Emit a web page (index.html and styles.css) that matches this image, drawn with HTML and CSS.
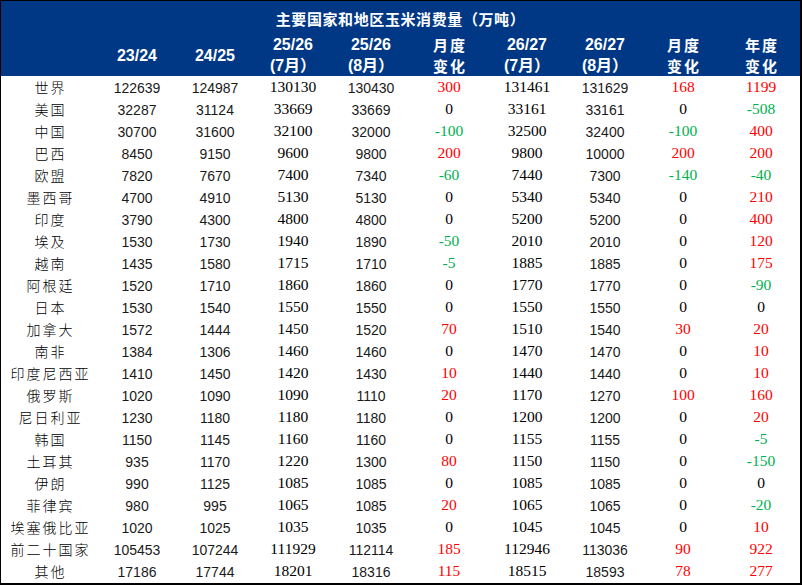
FILE: index.html
```html
<!DOCTYPE html>
<html lang="zh">
<head>
<meta charset="utf-8">
<title>主要国家和地区玉米消费量</title>
<link rel="stylesheet" href="styles.css">
</head>
<body>
<div class="frame">
  <div class="head">
    <div class="title">主要国家和地区玉米消费量（万吨）</div>
    <div class="row hrow">
      <div></div>
      <div class="hc">23/24</div>
      <div class="hc">24/25</div>
      <div class="hc">25/26<br>(7月）</div>
      <div class="hc">25/26<br>(8月）</div>
      <div class="hc zh">月度<br>变化</div>
      <div class="hc">26/27<br>(7月）</div>
      <div class="hc">26/27<br>(8月）</div>
      <div class="hc zh">月度<br>变化</div>
      <div class="hc zh">年度<br>变化</div>
    </div>
  </div>
  <div class="body">
    <div class="row"><div class="nm">世界</div><div class="sn">122639</div><div class="sn">124987</div><div class="sf">130130</div><div class="sn">130430</div><div class="sf r">300</div><div class="sf">131461</div><div class="sn">131629</div><div class="sf r">168</div><div class="sf r">1199</div></div>
    <div class="row"><div class="nm">美国</div><div class="sn">32287</div><div class="sn">31124</div><div class="sf">33669</div><div class="sn">33669</div><div class="sf">0</div><div class="sf">33161</div><div class="sn">33161</div><div class="sf">0</div><div class="sf g">-508</div></div>
    <div class="row"><div class="nm">中国</div><div class="sn">30700</div><div class="sn">31600</div><div class="sf">32100</div><div class="sn">32000</div><div class="sf g">-100</div><div class="sf">32500</div><div class="sn">32400</div><div class="sf g">-100</div><div class="sf r">400</div></div>
    <div class="row"><div class="nm">巴西</div><div class="sn">8450</div><div class="sn">9150</div><div class="sf">9600</div><div class="sn">9800</div><div class="sf r">200</div><div class="sf">9800</div><div class="sn">10000</div><div class="sf r">200</div><div class="sf r">200</div></div>
    <div class="row"><div class="nm">欧盟</div><div class="sn">7820</div><div class="sn">7670</div><div class="sf">7400</div><div class="sn">7340</div><div class="sf g">-60</div><div class="sf">7440</div><div class="sn">7300</div><div class="sf g">-140</div><div class="sf g">-40</div></div>
    <div class="row"><div class="nm">墨西哥</div><div class="sn">4700</div><div class="sn">4910</div><div class="sf">5130</div><div class="sn">5130</div><div class="sf">0</div><div class="sf">5340</div><div class="sn">5340</div><div class="sf">0</div><div class="sf r">210</div></div>
    <div class="row"><div class="nm">印度</div><div class="sn">3790</div><div class="sn">4300</div><div class="sf">4800</div><div class="sn">4800</div><div class="sf">0</div><div class="sf">5200</div><div class="sn">5200</div><div class="sf">0</div><div class="sf r">400</div></div>
    <div class="row"><div class="nm">埃及</div><div class="sn">1530</div><div class="sn">1730</div><div class="sf">1940</div><div class="sn">1890</div><div class="sf g">-50</div><div class="sf">2010</div><div class="sn">2010</div><div class="sf">0</div><div class="sf r">120</div></div>
    <div class="row"><div class="nm">越南</div><div class="sn">1435</div><div class="sn">1580</div><div class="sf">1715</div><div class="sn">1710</div><div class="sf g">-5</div><div class="sf">1885</div><div class="sn">1885</div><div class="sf">0</div><div class="sf r">175</div></div>
    <div class="row"><div class="nm">阿根廷</div><div class="sn">1520</div><div class="sn">1710</div><div class="sf">1860</div><div class="sn">1860</div><div class="sf">0</div><div class="sf">1770</div><div class="sn">1770</div><div class="sf">0</div><div class="sf g">-90</div></div>
    <div class="row"><div class="nm">日本</div><div class="sn">1530</div><div class="sn">1540</div><div class="sf">1550</div><div class="sn">1550</div><div class="sf">0</div><div class="sf">1550</div><div class="sn">1550</div><div class="sf">0</div><div class="sf">0</div></div>
    <div class="row"><div class="nm">加拿大</div><div class="sn">1572</div><div class="sn">1444</div><div class="sf">1450</div><div class="sn">1520</div><div class="sf r">70</div><div class="sf">1510</div><div class="sn">1540</div><div class="sf r">30</div><div class="sf r">20</div></div>
    <div class="row"><div class="nm">南非</div><div class="sn">1384</div><div class="sn">1306</div><div class="sf">1460</div><div class="sn">1460</div><div class="sf">0</div><div class="sf">1470</div><div class="sn">1470</div><div class="sf">0</div><div class="sf r">10</div></div>
    <div class="row"><div class="nm">印度尼西亚</div><div class="sn">1410</div><div class="sn">1450</div><div class="sf">1420</div><div class="sn">1430</div><div class="sf r">10</div><div class="sf">1440</div><div class="sn">1440</div><div class="sf">0</div><div class="sf r">10</div></div>
    <div class="row"><div class="nm">俄罗斯</div><div class="sn">1020</div><div class="sn">1090</div><div class="sf">1090</div><div class="sn">1110</div><div class="sf r">20</div><div class="sf">1170</div><div class="sn">1270</div><div class="sf r">100</div><div class="sf r">160</div></div>
    <div class="row"><div class="nm">尼日利亚</div><div class="sn">1230</div><div class="sn">1180</div><div class="sf">1180</div><div class="sn">1180</div><div class="sf">0</div><div class="sf">1200</div><div class="sn">1200</div><div class="sf">0</div><div class="sf r">20</div></div>
    <div class="row"><div class="nm">韩国</div><div class="sn">1150</div><div class="sn">1145</div><div class="sf">1160</div><div class="sn">1160</div><div class="sf">0</div><div class="sf">1155</div><div class="sn">1155</div><div class="sf">0</div><div class="sf g">-5</div></div>
    <div class="row"><div class="nm">土耳其</div><div class="sn">935</div><div class="sn">1170</div><div class="sf">1220</div><div class="sn">1300</div><div class="sf r">80</div><div class="sf">1150</div><div class="sn">1150</div><div class="sf">0</div><div class="sf g">-150</div></div>
    <div class="row"><div class="nm">伊朗</div><div class="sn">990</div><div class="sn">1125</div><div class="sf">1085</div><div class="sn">1085</div><div class="sf">0</div><div class="sf">1085</div><div class="sn">1085</div><div class="sf">0</div><div class="sf">0</div></div>
    <div class="row"><div class="nm">菲律宾</div><div class="sn">980</div><div class="sn">995</div><div class="sf">1065</div><div class="sn">1085</div><div class="sf r">20</div><div class="sf">1065</div><div class="sn">1065</div><div class="sf">0</div><div class="sf g">-20</div></div>
    <div class="row"><div class="nm">埃塞俄比亚</div><div class="sn">1020</div><div class="sn">1025</div><div class="sf">1035</div><div class="sn">1035</div><div class="sf">0</div><div class="sf">1045</div><div class="sn">1045</div><div class="sf">0</div><div class="sf r">10</div></div>
    <div class="row"><div class="nm">前二十国家</div><div class="sn">105453</div><div class="sn">107244</div><div class="sf">111929</div><div class="sn">112114</div><div class="sf r">185</div><div class="sf">112946</div><div class="sn">113036</div><div class="sf r">90</div><div class="sf r">922</div></div>
    <div class="row"><div class="nm">其他</div><div class="sn">17186</div><div class="sn">17744</div><div class="sf">18201</div><div class="sn">18316</div><div class="sf r">115</div><div class="sf">18515</div><div class="sn">18593</div><div class="sf r">78</div><div class="sf r">277</div></div>
  </div>
</div>
</body>
</html>
```

FILE: styles.css
```css
html, body {
  margin: 0;
  padding: 0;
  background: #ffffff;
}

.frame {
  width: 802px;
  height: 585px;
  box-sizing: border-box;
  border-top: 1px solid #000;
  border-left: 1px solid #000;
  border-right: 2px solid #000;
  border-bottom: 2px solid #000;
  overflow: hidden;
  background: #fff;
}

.head {
  background: #003886;
  color: #ffffff;
  height: 75px;
  display: flex;
  flex-direction: column;
}

.title {
  height: 33px;
  box-sizing: border-box;
  padding-top: 8px;
  line-height: 20px;
  text-align: center;
  font-family: "Noto Sans CJK SC", sans-serif;
  font-weight: bold;
  font-size: 15px;
  letter-spacing: 0.6px;
  white-space: nowrap;
}

.row {
  display: grid;
  grid-template-columns: 97px repeat(9, 78px);
  height: 22px;
  align-items: center;
  text-align: center;
  white-space: nowrap;
}

.hrow {
  height: 42px;
}

.hc {
  font-family: "Liberation Sans", "Noto Sans CJK SC", sans-serif;
  font-weight: bold;
  font-size: 16px;
  line-height: 21px;
}

.hc.zh {
  font-family: "Noto Sans CJK SC", sans-serif;
  font-size: 15px;
  letter-spacing: 2px;
  padding-left: 2px;
}

.nm {
  font-family: "Noto Sans CJK SC", sans-serif;
  font-weight: 300;
  font-size: 14px;
  line-height: 22px;
  letter-spacing: 2px;
  padding-left: 2px;
  color: #000;
}

.sn {
  font-family: "Liberation Sans", sans-serif;
  font-size: 14px;
  line-height: 20px;
  padding-top: 2px;
  color: #1a1a1a;
}

.sf {
  font-family: "Liberation Serif", serif;
  font-size: 15.5px;
  line-height: 21px;
  padding-bottom: 1px;
  color: #000;
}

.r { color: #ff0000; }
.g { color: #00b050; }
```
